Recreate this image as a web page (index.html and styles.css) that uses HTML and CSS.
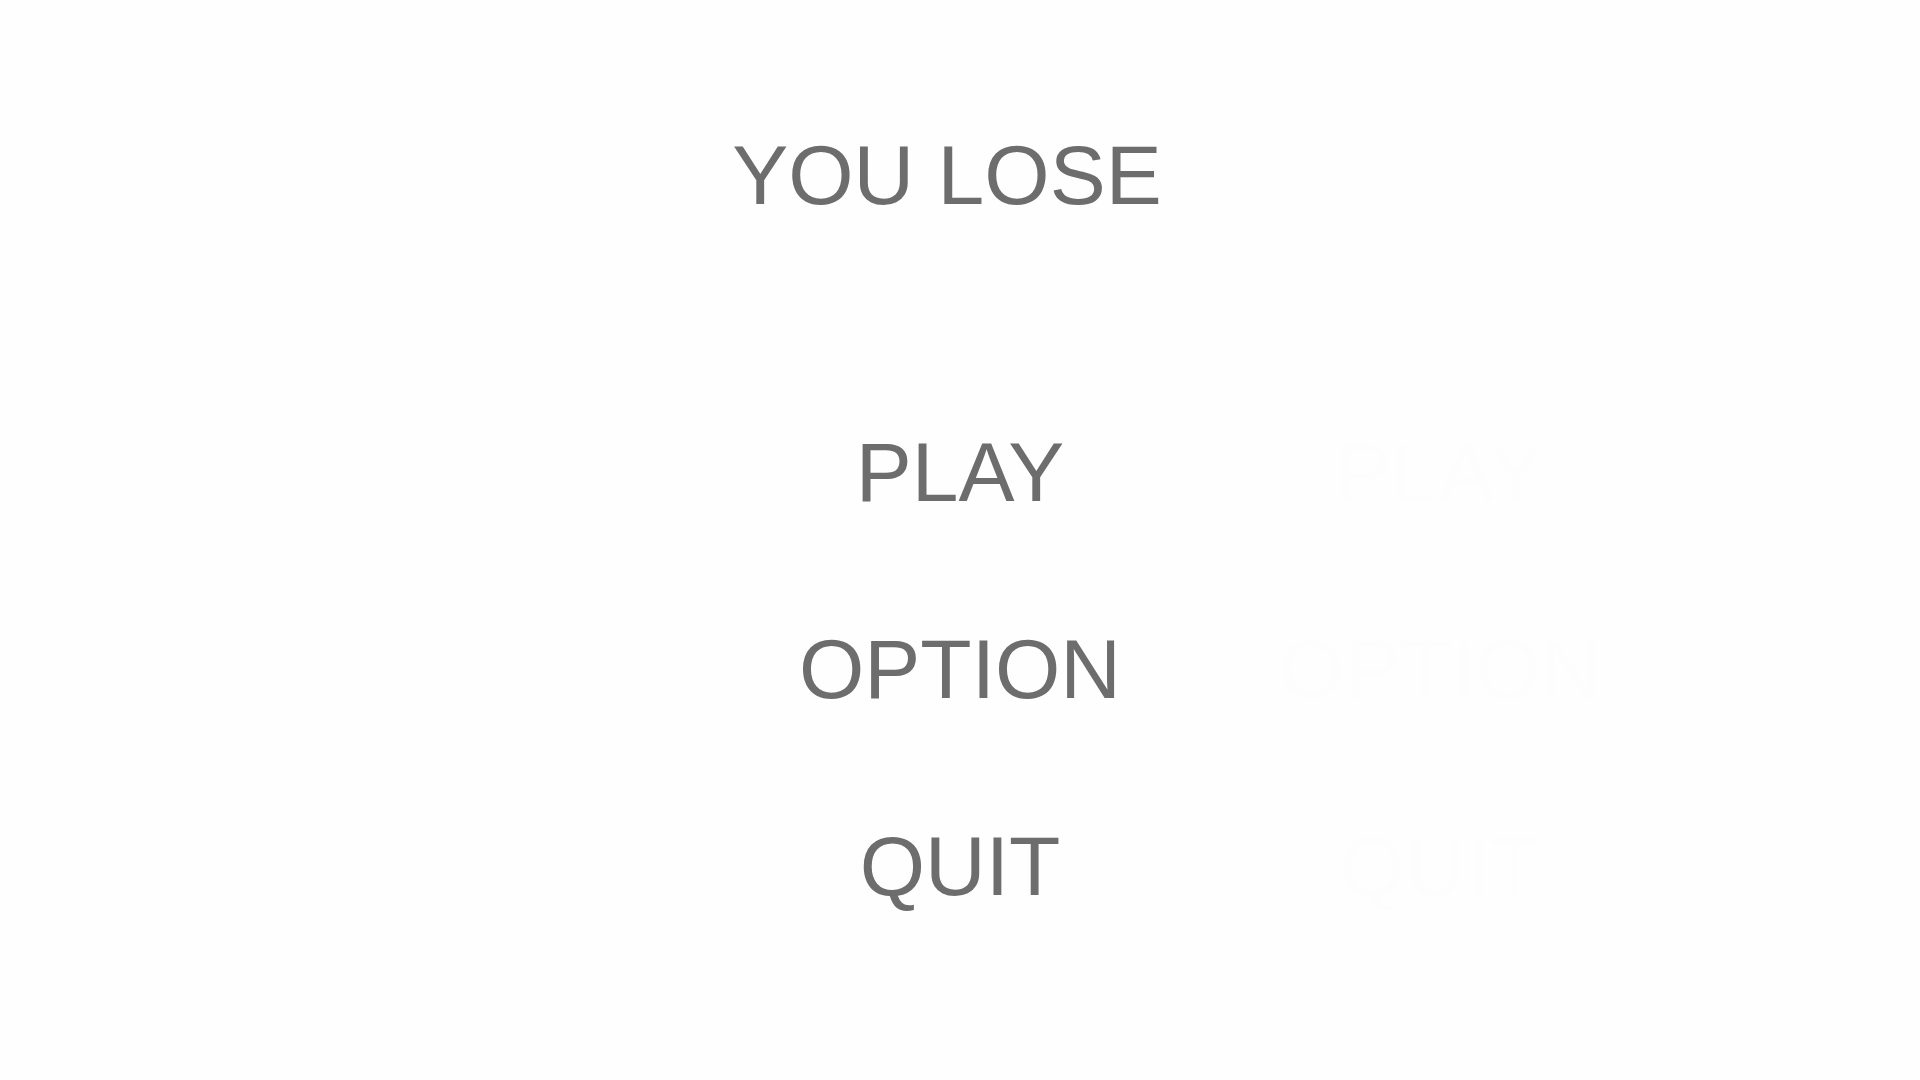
FILE: index.html
```html
<!DOCTYPE html>
<html lang="en">
<head>
<meta charset="utf-8">
<title>You Lose</title>
<link rel="stylesheet" href="styles.css">
</head>
<body>
<main class="screen">
<h1 class="title">YOU LOSE</h1>
<nav class="menu" aria-label="Game menu">
<div class="row"><button class="item" type="button">PLAY</button><span class="ghost" aria-hidden="true">PLAY</span></div>
<div class="row"><button class="item" type="button">OPTION</button><span class="ghost" aria-hidden="true">OPTION</span></div>
<div class="row"><button class="item" type="button">QUIT</button><span class="ghost" aria-hidden="true">QUIT</span></div>
</nav>
</main>
</body>
</html>
```

FILE: styles.css
```css
* {
  box-sizing: border-box;
}

body {
  margin: 0;
  background: #fefefe;
  color: #6d6d6d;
  font: 84px/100px "Liberation Sans", Arial, sans-serif;
}

.screen {
  min-height: 100vh;
  padding-top: 125px;
}

.title {
  margin: 0 26px 197px 0;
  font: inherit;
  text-align: center;
}

.menu {
  display: grid;
  gap: 97px;
}

.row {
  display: grid;
  grid-template-columns: 3fr 2fr 2fr 1fr;
}

.item {
  grid-column: 2;
  border: 0;
  padding: 0;
  background: none;
  color: inherit;
  font: inherit;
  text-align: center;
  cursor: pointer;
}

.ghost {
  color: #fdfdfd;
  text-align: center;
}
```
